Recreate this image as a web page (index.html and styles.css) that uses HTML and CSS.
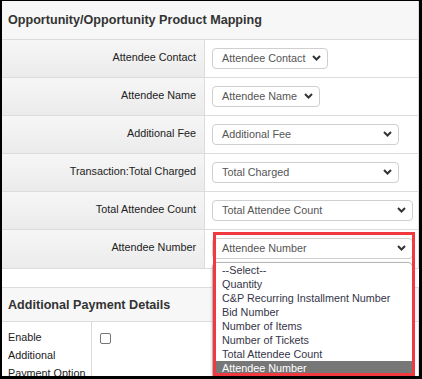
FILE: index.html
```html
<!DOCTYPE html>
<html>
<head>
<meta charset="utf-8">
<link rel="stylesheet" href="styles.css">
</head>
<body>
<div class="frame">
  <section class="panel">
    <div class="panel-head">Opportunity/Opportunity Product Mapping</div>
    <div class="map-row">
      <div class="map-label">Attendee Contact</div>
      <div class="map-field"><div class="sel w116"><span>Attendee Contact</span><svg class="chev" width="9" height="6" viewBox="0 0 9 6"><polyline points="1,1 4.5,4.5 8,1" fill="none" stroke="#333" stroke-width="2"/></svg></div></div>
    </div>
    <div class="map-row">
      <div class="map-label">Attendee Name</div>
      <div class="map-field"><div class="sel w108"><span>Attendee Name</span><svg class="chev" width="9" height="6" viewBox="0 0 9 6"><polyline points="1,1 4.5,4.5 8,1" fill="none" stroke="#333" stroke-width="2"/></svg></div></div>
    </div>
    <div class="map-row">
      <div class="map-label">Additional Fee</div>
      <div class="map-field"><div class="sel w187"><span>Additional Fee</span><svg class="chev" width="9" height="6" viewBox="0 0 9 6"><polyline points="1,1 4.5,4.5 8,1" fill="none" stroke="#333" stroke-width="2"/></svg></div></div>
    </div>
    <div class="map-row">
      <div class="map-label">Transaction:Total Charged</div>
      <div class="map-field"><div class="sel w187"><span>Total Charged</span><svg class="chev" width="9" height="6" viewBox="0 0 9 6"><polyline points="1,1 4.5,4.5 8,1" fill="none" stroke="#333" stroke-width="2"/></svg></div></div>
    </div>
    <div class="map-row">
      <div class="map-label">Total Attendee Count</div>
      <div class="map-field"><div class="sel w201"><span>Total Attendee Count</span><svg class="chev" width="9" height="6" viewBox="0 0 9 6"><polyline points="1,1 4.5,4.5 8,1" fill="none" stroke="#333" stroke-width="2"/></svg></div></div>
    </div>
    <div class="map-row">
      <div class="map-label">Attendee Number</div>
      <div class="map-field">
        <div class="sel w201 open"><span>Attendee Number</span><svg class="chev" width="9" height="6" viewBox="0 0 9 6"><polyline points="1,1 4.5,4.5 8,1" fill="none" stroke="#333" stroke-width="2"/></svg>
          <ul class="options">
            <li>--Select--</li>
            <li>Quantity</li>
            <li>C&amp;P Recurring Installment Number</li>
            <li>Bid Number</li>
            <li>Number of Items</li>
            <li>Number of Tickets</li>
            <li>Total Attendee Count</li>
            <li class="picked">Attendee Number</li>
          </ul>
        </div>
      </div>
    </div>
  </section>

  <section class="panel panel-2">
    <div class="panel-head small">Additional Payment Details</div>
    <div class="pay-row">
      <div class="pay-label">Enable<br>Additional<br>Payment Option</div>
      <div class="pay-field"><span class="check"></span></div>
    </div>
  </section>
</div>
<div class="highlight"></div>
</body>
</html>
```

FILE: styles.css
```css
html, body {
  margin: 0;
  padding: 0;
  background: #fff;
}

body {
  width: 422px;
  height: 379px;
  font-family: "Liberation Sans", Arial, sans-serif;
}

.frame {
  width: 422px;
  height: 379px;
  box-sizing: border-box;
  border-style: solid;
  border-color: #000;
  border-width: 1px 3px 3px 2px;
  overflow: hidden;
  background: #fff;
}

.panel {
  border-right: 1px solid #dcdcdc;
  border-bottom: 1px solid #dcdcdc;
}

.panel-head {
  height: 39px;
  box-sizing: border-box;
  border-bottom: 1px solid #dcdcdc;
  background: #f7f7f7;
  padding-left: 6px;
  display: flex;
  align-items: center;
  font-size: 12.6px;
  font-weight: bold;
  color: #333;
}

.map-row {
  display: grid;
  grid-template-columns: 203px 1fr;
  height: 38px;
  box-sizing: border-box;
  border-bottom: 1px solid #dcdcdc;
}

.map-row:last-child {
  border-bottom: none;
}

.map-label {
  background: linear-gradient(#f6f6f6, #ebebeb);
  border-right: 1px solid #dcdcdc;
  text-align: right;
  padding: 10px 8px 0 0;
  font-size: 10.8px;
  line-height: 14px;
  color: #222;
}

.map-field {
  padding: 7.5px 0 0 7px;
}

.sel {
  position: relative;
  height: 21px;
  box-sizing: border-box;
  border: 1px solid #cfcfcf;
  border-radius: 4px;
  background: #fff;
  display: flex;
  align-items: center;
  justify-content: space-between;
  padding: 0 6px 0 9px;
  font-size: 10.8px;
  color: #555;
}

.w116 { width: 116px; }
.w108 { width: 108px; }
.w187 { width: 187px; }
.w201 { width: 201px; }

.chev {
  display: block;
  flex: none;
}

.options {
  position: absolute;
  left: -1px;
  top: calc(100% + 4px);
  width: 201px;
  box-sizing: border-box;
  margin: 0;
  padding: 0;
  list-style: none;
  background: #fff;
  border: 1px solid #b5b5b5;
  border-radius: 5px 5px 0 0;
  box-shadow: 0 1px 3px rgba(0, 0, 0, 0.2);
  z-index: 2;
}

.options li {
  height: 14.1px;
  line-height: 14.1px;
  padding-left: 9px;
  font-size: 10.8px;
  color: #353548;
  white-space: nowrap;
}

.options li.picked {
  background: #777;
  color: #fff;
}

.panel-2 {
  margin-top: 18px;
  border-top: 1px solid #dcdcdc;
  border-bottom: none;
}

.panel-head.small {
  height: 34px;
}

.pay-row {
  display: grid;
  grid-template-columns: 90px 1fr;
}

.pay-label {
  border-right: 1px solid #dcdcdc;
  padding: 6px 0 0 6px;
  font-size: 10.8px;
  line-height: 18px;
  color: #222;
}

.pay-field {
  padding: 11px 0 0 8px;
}

.check {
  display: block;
  width: 11px;
  height: 11px;
  box-sizing: border-box;
  border: 1px solid #767676;
  border-radius: 2px;
  background: #fff;
}

.highlight {
  position: absolute;
  left: 213px;
  top: 232px;
  width: 202px;
  height: 144px;
  box-sizing: border-box;
  border: 3px solid #f2393f;
  z-index: 5;
}
```
